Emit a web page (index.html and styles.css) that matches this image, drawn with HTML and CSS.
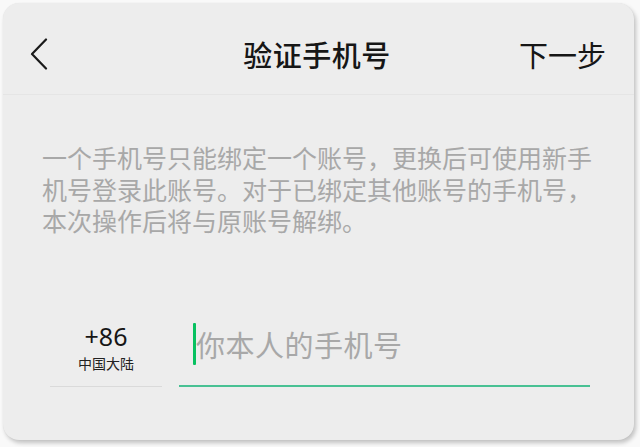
FILE: index.html
```html
<!DOCTYPE html>
<html lang="zh-CN">
<head>
<meta charset="utf-8">
<link rel="stylesheet" href="styles.css">
</head>
<body>
<div class="card">
  <header class="header">
    <div class="back">
      <svg width="18" height="32" viewBox="0 0 18 32"><polyline points="16,1.5 2,16 16,30.5" fill="none" stroke="#1a1a1a" stroke-width="2.2" stroke-linecap="round" stroke-linejoin="round"/></svg>
    </div>
    <div class="title">验证手机号</div>
    <div class="next">下一步</div>
  </header>
  <p class="desc">一个手机号只能绑定一个账号，更换后可使用新手机号登录此账号。对于已绑定其他账号的手机号，本次操作后将与原账号解绑。</p>
  <div class="row">
    <div class="country">
      <div class="code">+86</div>
      <div class="region">中国大陆</div>
    </div>
    <div class="phone">
      <span class="cursor"></span>
      <span class="placeholder">你本人的手机号</span>
    </div>
  </div>
</div>
</body>
</html>
```

FILE: styles.css
```css
html, body {
  margin: 0;
  padding: 0;
}
body {
  background: #f9f9f9;
  font-family: "Noto Sans CJK SC", "Noto Sans", sans-serif;
  width: 640px;
  height: 447px;
  overflow: hidden;
}
.card {
  margin: 3px 0 0 3px;
  width: 631px;
  height: 437px;
  box-sizing: border-box;
  background: #ededed;
  border-radius: 16px;
  box-shadow: 2px 3px 4px rgba(0, 0, 0, 0.22), 0 0 1px rgba(0,0,0,0.08);
  overflow: hidden;
}
.header {
  height: 92px;
  box-sizing: border-box;
  padding: 11px 28px 0 27px;
  display: grid;
  grid-template-columns: 1fr auto 1fr;
  align-items: center;
  border-bottom: 1px solid #e5e5e5;
}
.back {
  justify-self: start;
  display: flex;
  align-items: center;
  height: 32px;
}
.back svg { display: block; }
.title {
  font-size: 29px;
  font-weight: 500;
  color: #161616;
  line-height: 40px;
  margin-left: -2px;
  letter-spacing: 0.5px;
}
.next {
  justify-self: end;
  font-size: 29px;
  font-weight: 400;
  color: #161616;
  line-height: 40px;
}
.desc {
  margin: 47px 0 0 39px;
  width: 560px;
  font-size: 25px;
  line-height: 31.5px;
  color: #a8a8a8;
}
.row {
  margin: 85px 44px 0 47px;
  display: flex;
  gap: 17px;
  align-items: stretch;
}
.country {
  width: 112px;
  flex: none;
  display: flex;
  flex-direction: column;
  align-items: center;
  padding-bottom: 14px;
  border-bottom: 1px solid #dadada;
}
.code {
  font-family: "Noto Sans", sans-serif;
  font-size: 25px;
  line-height: 28px;
  color: #161616;
}
.region {
  font-size: 14px;
  line-height: 18px;
  margin-top: 4px;
  color: #222;
}
.phone {
  flex: 1;
  display: flex;
  align-items: flex-start;
  padding: 1px 0 0 14px;
  border-bottom: 2px solid #48c193;
}
.cursor {
  width: 3px;
  height: 42px;
  background: #07c160;
  border-radius: 1px;
  flex: none;
}
.placeholder {
  font-size: 29px;
  line-height: 42px;
  color: #a8a8a8;
  letter-spacing: 0.5px;
}
```
